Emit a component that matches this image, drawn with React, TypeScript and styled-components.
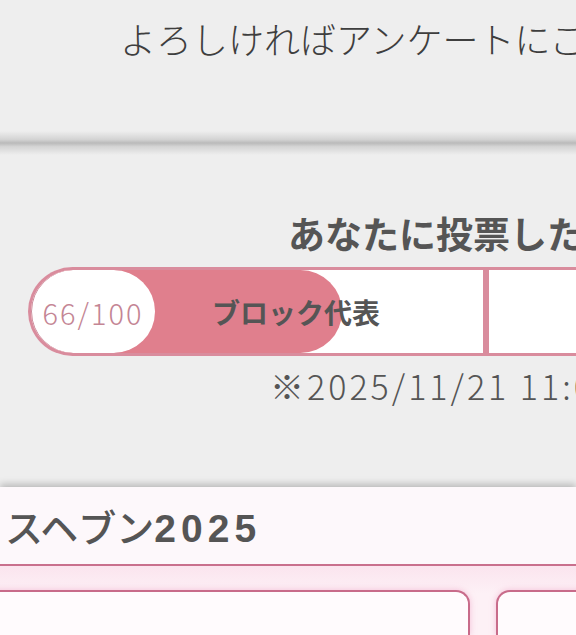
import React from "react";
import styled, { createGlobalStyle } from "styled-components";

const GlobalStyle = createGlobalStyle`
  html, body {
    margin: 0;
    padding: 0;
    background: #eeeeee;
    overflow: hidden;
  }
  body {
    font-family: "Noto Sans CJK JP", "Noto Sans", sans-serif;
    color: #444;
  }
`;

const Page = styled.div`
  width: 576px;
  height: 635px;
  overflow: hidden;
  display: flex;
  flex-direction: column;
`;

const Line = styled.div<{ $size: number; $weight?: number; $left: number; $color?: string; $spacing?: number }>`
  padding-left: ${(p) => p.$left}px;
  font-size: ${(p) => p.$size}px;
  font-weight: ${(p) => p.$weight ?? 400};
  color: ${(p) => p.$color ?? "#444"};
  letter-spacing: ${(p) => p.$spacing ?? 0}px;
  line-height: 1;
  white-space: nowrap;
`;

const TopNote = styled(Line)`
  padding-top: 20px;
`;

const ShadowRule = styled.div`
  height: 24px;
  margin-top: 75px;
  background: linear-gradient(to bottom, #eeeeee 0%, #d4d4d4 35%, #bababa 50%, #d4d4d4 65%, #eeeeee 100%);
`;

const Heading = styled(Line)`
  margin-top: 60px;
`;

const VoteBar = styled.div`
  margin-top: 15px;
  margin-left: 28px;
  width: 900px;
  height: 89px;
  box-sizing: border-box;
  border: 3px solid #d98c9d;
  border-right: none;
  border-radius: 45px 0 0 45px;
  background: #ffffff;
  display: flex;
  flex-shrink: 0;
`;

const VoteCell = styled.div<{ $width?: number }>`
  position: relative;
  width: ${(p) => (p.$width ? `${p.$width}px` : "auto")};
  flex: ${(p) => (p.$width ? "none" : "1")};
  display: flex;
  align-items: center;
  border-radius: 42px 0 0 42px;
  overflow: hidden;

  & + & {
    border-left: 6px solid #d98c9d;
    border-radius: 0;
  }
`;

const Fill = styled.div`
  position: absolute;
  left: 0;
  top: 0;
  bottom: 0;
  background: #e07f8d;
  border-radius: 0 43px 43px 0;
`;

const Counter = styled.div`
  position: relative;
  width: 124px;
  height: 100%;
  border-radius: 43px;
  background: #ffffff;
  box-shadow: inset 1px 0 0 #c98797;
  display: flex;
  align-items: center;
  justify-content: center;
  font-size: 29px;
  font-weight: 300;
  color: #c48594;
  letter-spacing: 2px;
`;

const BlockLabel = styled.div`
  position: relative;
  margin-left: 57px;
  font-size: 28px;
  font-weight: 700;
  color: #555;
  white-space: nowrap;
`;

const DateNote = styled(Line)`
  margin-top: 13px;
`;

const Panel = styled.div`
  margin-top: 84px;
  background: #fdf8fb;
  box-shadow: 0 -3px 7px rgba(0, 0, 0, 0.22);
  display: flex;
  flex-direction: column;
  flex: 1;
`;

const PanelTitle = styled(Line)`
  height: 40px;
  padding-top: 20px;
  padding-bottom: 17px;
  border-bottom: 2px solid #c9708d;
`;

const Year = styled.span`
  font-family: "Liberation Sans", Arial, sans-serif;
  font-weight: 700;
  font-size: 39px;
  letter-spacing: 5px;
`;

const CardRow = styled.div`
  flex: 1;
  display: flex;
  gap: 26px;
  margin-left: -20px;
  padding-top: 24px;
  background: linear-gradient(to bottom, #fbe4ee, #fdf1f6 40%, #fdf1f6);
`;

const Card = styled.div`
  width: 490px;
  flex-shrink: 0;
  box-sizing: border-box;
  border: 2px solid #c86b8a;
  border-bottom: none;
  border-radius: 14px 14px 0 0;
  background: #fffbfd;
  box-shadow: 0 0 6px rgba(236, 150, 190, 0.55);
`;

export default function App() {
  const votes = 66;
  const total = 100;

  return (
    <>
      <GlobalStyle />
      <Page>
        <TopNote $size={36} $weight={300} $left={120} $color="#3e3e3e">
          よろしければアンケートにご協力ください
        </TopNote>
        <ShadowRule />
        <Heading $size={37} $weight={700} $left={288} $color="#555">
          あなたに投票したブロック
        </Heading>
        <VoteBar>
          <VoteCell $width={452}>
            <Fill style={{ width: `calc(${(votes / total) * 100}% + 13px)` }} />
            <Counter>
              {votes}/{total}
            </Counter>
            <BlockLabel>ブロック代表</BlockLabel>
          </VoteCell>
          <VoteCell />
        </VoteBar>
        <DateNote $size={34} $weight={300} $left={270} $color="#555" $spacing={3}>
          ※2025/11/21 11:00 時点
        </DateNote>
        <Panel>
          <PanelTitle $size={38} $weight={500} $left={5} $color="#555">
            スヘブン<Year>2025</Year>
          </PanelTitle>
          <CardRow>
            <Card />
            <Card />
          </CardRow>
        </Panel>
      </Page>
    </>
  );
}
